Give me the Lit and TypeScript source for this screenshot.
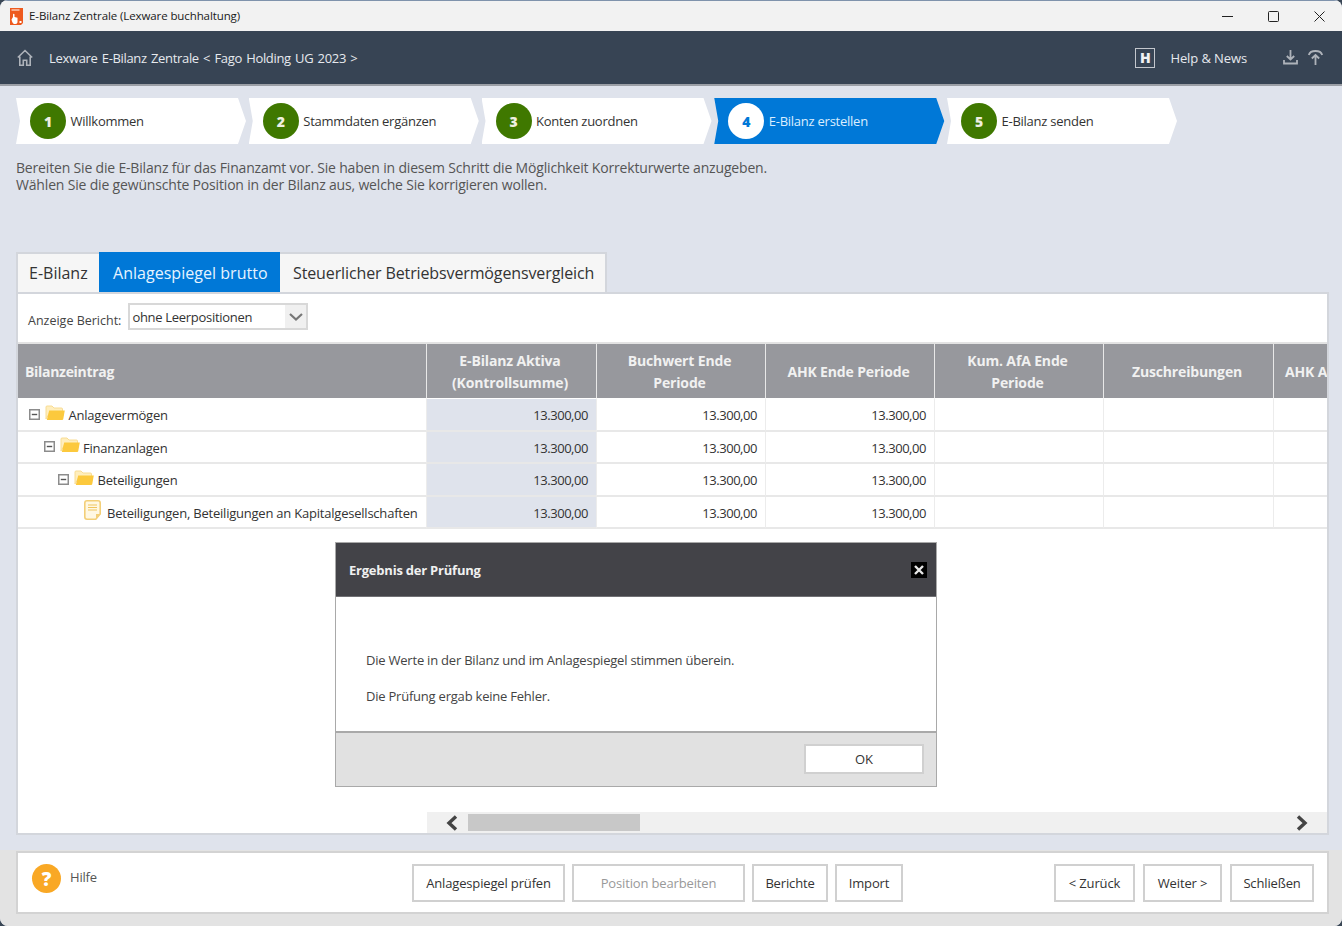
import { LitElement, html, css, svg } from "lit";
import { customElement } from "lit/decorators.js";

const folder = svg`<svg class="folder" viewBox="0 0 20 16" width="20" height="16"><path d="M1 14V2c0-.6.4-1 1-1h5l2 2h7.500c.6 0 1 .4 1 1v3H5z" fill="#ffeebd" stroke="#f8dc94" stroke-width="1"/><path d="M4.200 5.500H19.800l-1.600 8.700c-.1.5-.5.8-1 .8H1.800z" fill="#fcc93d"/></svg>`;
const minus = svg`<svg class="toggle" viewBox="0 0 11 11" width="11" height="11"><rect x=".75" y=".75" width="9.5" height="9.5" fill="#fff" stroke="#8c8c8c" stroke-width="1.5"/><path d="M2.8 5.5h5.4" stroke="#555" stroke-width="1.4"/></svg>`;
const leaf = svg`<svg viewBox="0 0 17 20" width="17" height="20"><path d="M3 .8h11c1.2 0 2.2 1 2.2 2.2v11l-4.400 5.200H3C1.800 19.200.8 18.200.8 17V3C.8 1.800 1.800.8 3 .8z" fill="#fff8e3" stroke="#f3cf78" stroke-width="1.6"/><path d="M4 5h9M4 7.500h9M4 10h9" stroke="#f0c560" stroke-width="1.200"/><path d="M12 18.500v-4.500h4.200z" fill="#f3cf78"/></svg>`;

const STEPS = ["Willkommen", "Stammdaten ergänzen", "Konten zuordnen", "E-Bilanz erstellen", "E-Bilanz senden"];
const COLS = [["E-Bilanz Aktiva", "(Kontrollsumme)"], ["Buchwert Ende", "Periode"], ["AHK Ende Periode"], ["Kum. AfA Ende", "Periode"], ["Zuschreibungen"], ["AHK Anfang"]];
const ROWS = [
  { name: "Anlagevermögen", depth: 0, cls: "r0" },
  { name: "Finanzanlagen", depth: 1, cls: "r1" },
  { name: "Beteiligungen", depth: 2, cls: "r2" },
  { name: "Beteiligungen, Beteiligungen an Kapitalgesellschaften", depth: 3, cls: "r3" },
];

@customElement("app-root")
export class AppRoot extends LitElement {
  static styles = css`
    :host { display: block; width: 1342px; height: 926px; overflow: hidden; background: #3a4756; font-family: "Open Sans", "Noto Sans", sans-serif; color: #333; }
    * { box-sizing: border-box; }
    .win { width: 1342px; height: 926px; display: flex; flex-direction: column; border-radius: 8px; overflow: hidden; background: #dfe3ec; }
    .title { height: 31px; flex: none; background: #f2f2f2; border-top: 1px solid #7f93ac; display: flex; align-items: center; padding-left: 10px; }
    .appicon { width: 13px; height: 17px; flex: none; margin-right: 6px; }
    .title-text { font-size: 11.5px; letter-spacing: -.1px; color: #1a1a1a; flex: 1; padding-bottom: 1px; }
    .winbtns { display: flex; width: 138px; height: 30px; align-items: center; }
    .winbtns svg { display: block; margin: 0 auto; }
    .winbtns div { flex: 1; }
    .head { height: 55px; flex: none; background: #374454; border-bottom: 2px solid #9b9fa6; display: flex; align-items: center; padding: 0 19px 0 17px; color: #e6e9ee; font-size: 13px; letter-spacing: -.13px; }
    .crumb { margin-left: 16px; flex: 1; letter-spacing: -.33px; word-spacing: 1.2px; }
    .hbox { width: 20px; height: 20px; border: 1.5px solid #c3c7cd; display: flex; align-items: center; justify-content: center; margin-right: 15px; font-size: 14px; font-weight: 800; color: #f0f2f5; letter-spacing: 0; }
    .news { margin-right: 36px; letter-spacing: -.1px; }
    .dl { margin-right: 10px; }
    .steps { display: flex; gap: 1.75px; padding: 12px 0 0 16px; height: 58px; flex: none; }
    .step { width: 231px; height: 46px; background: #fff; display: flex; align-items: center; padding-left: 14px; clip-path: polygon(0 0, 222px 0, 230px 23px, 222px 46px, 0 46px, 4px 23px); font-size: 13px; letter-spacing: -.25px; color: #333; }
    .num { width: 36px; height: 36px; border-radius: 50%; background: #3f7800; color: #f0f0e0; display: flex; align-items: center; justify-content: center; font-weight: 800; font-size: 14px; margin-right: 4.5px; letter-spacing: 0; padding-top: 1px; flex: none; }
    .lab { padding-bottom: 1px; }
    .step.on { background: #0078d7; color: #dbeeff; }
    .step.on .num { background: #fff; color: #0078d7; }
    .intro { height: 108px; flex: none; padding: 16px 0 0 16px; font-size: 14px; letter-spacing: -.175px; line-height: 16.5px; color: #555; }
    .tabs { display: flex; height: 40px; flex: none; margin-left: 16px; font-size: 16px; color: #333; white-space: nowrap; }
    .tab { display: flex; align-items: center; background: #f6f6f6; border: 2px solid #d3d6dc; border-bottom: 0; padding: 0 11px; flex: none; }
    .tab.a { width: 83px; border-right: 0; }
    .tab.b { width: 181px; background: #0078d7; color: #e6f3ff; border-color: #0078d7; padding-left: 12px; letter-spacing: .03px; }
    .tab.c { width: 327px; border-left: 0; padding-left: 13px; letter-spacing: -.12px; }
    .panel { margin: 0 13px 0 16px; height: 543px; flex: none; background: #fff; border: 2px solid #d3d6dc; display: flex; flex-direction: column; position: relative; overflow: hidden; }
    .filter { height: 50px; flex: none; display: flex; align-items: center; padding: 0 0 2px 10px; border-bottom: 2px solid #e3e3e3; font-size: 12.5px; letter-spacing: 0; color: #444; }
    .filter .l { margin-top: 6px; margin-right: 7px; }
    .sel { width: 180px; height: 27px; margin-top: -1px; border: 2px solid #d8d8d8; display: flex; align-items: center; justify-content: space-between; font-size: 13px; letter-spacing: -.3px; color: #333; padding-left: 2px; }
    .arrow { width: 21px; height: 100%; background: #f0f0f0; display: flex; align-items: center; justify-content: center; }
    .grid { display: grid; grid-template-columns: 409px 170px 169px 169px 169px 170px 60px; grid-auto-rows: auto; flex: 1; align-content: start; width: 1316px; }
    .th { height: 55px; background: #97989d; color: #f1f1f1; font-weight: 700; font-size: 14px; letter-spacing: -.15px; line-height: 21.5px; display: flex; align-items: center; justify-content: center; text-align: center; border-right: 1px solid #e8e8e8; border-bottom: 1px solid #fff; padding: 1px 3px 0 0; }
    .th.first { justify-content: flex-start; padding-left: 7px; letter-spacing: -.3px; }
    .th.cut { justify-content: flex-start; padding-left: 11px; white-space: nowrap; overflow: hidden; }
    .td { height: 32.5px; border-right: 1px solid #ececec; border-bottom: 2px solid #e8e8e8; font-size: 13px; letter-spacing: -.45px; text-align: right; padding: 7px 8px 0 0; color: #333; line-height: 18px; }
    .td.grey { background: #dfe3ec; }
    .tree { display: flex; align-items: center; text-align: left; padding: 0; font-size: 13px; letter-spacing: -.22px; }
    .tree svg { flex: none; }
    .tree .toggle { margin-right: 5px; }
    .tree .folder { margin-right: 3.5px; margin-top: -3px; }
    .r0 { padding-left: 11px; }
    .r1 { padding-left: 25.5px; }
    .r2 { padding-left: 40px; }
    .r3 { padding-left: 66px; }
    .r3 svg { margin-right: 6px; margin-top: -3px; }
    .tree span { padding-top: 2px; }
    .scroll { height: 21px; flex: none; margin-left: 409px; background: #f0f0f0; display: flex; align-items: center; padding-left: 18px; padding-right: 18px; }
    .scroll svg { margin-top: 1px; }
    .thumb { width: 172px; height: 17px; background: #c8c8c8; margin-left: 9px; }
    .sp { flex: 1; }
    .dialog { position: absolute; left: 317px; top: 248px; width: 602px; height: 245px; border: 1px solid #a9a9a9; background: #fff; display: flex; flex-direction: column; }
    .dh { height: 54px; flex: none; background: #434348; border-bottom: 1px solid #707074; color: #f0f0f0; font-weight: 700; font-size: 13px; letter-spacing: -.22px; display: flex; align-items: center; justify-content: space-between; padding: 0 9px 0 13px; }
    .x { width: 16px; height: 16px; background: #000; display: flex; align-items: center; justify-content: center; }
    .db { flex: 1; padding: 54px 0 0 30px; font-size: 13px; letter-spacing: -.22px; color: #444; line-height: 18px; }
    .db p { margin: 0 0 17.5px; }
    .df { height: 55px; flex: none; background: #e1e1e1; border-top: 2px solid #a9a9a9; display: flex; align-items: center; justify-content: flex-end; padding: 0 12px 2px 0; }
    .df button { width: 120px; height: 30px; }
    button { font: inherit; background: #fff; border: 2px solid #d0d0d0; color: #333; font-size: 13px; letter-spacing: -.15px; height: 38px; padding: 0; display: block; flex: none; }
    .foot { flex: 1; background: #e3e3e3; padding: 1px 13px 0 16px; margin-top: 15px; }
    .fbar { height: 63px; background: #fff; border: 2px solid #d3d3d3; display: flex; padding: 11px 13px 0 14px; }
    .help { display: flex; width: 380px; height: 30px; font-size: 13px; letter-spacing: -.2px; color: #555; }
    .q { width: 29px; height: 29px; border-radius: 50%; background: #f9a825; color: #fff; font-weight: 800; font-size: 19px; display: flex; align-items: center; justify-content: center; margin-right: 9px; letter-spacing: 0; }
    .help .ht { padding-top: 4px; }
    .left { display: flex; gap: 7px; }
    .right { display: flex; gap: 8px; }
    .dis { color: #999; }
  `;

  render() {
    return html`<div class="win">
      <div class="title">
        <svg class="appicon" viewBox="0 0 13 17"><path d="M0 0h13v15l-2 2H0z" fill="#ee5a1e"/><path d="M1.500 2h8" stroke="#fff" stroke-width="1.200"/><path d="M3 9V6.500c0-1 1.500-1 1.500 0V9l3 .8V14c0 1-.8 2-2 2H4.500C3 16 2 14 1.500 11.500z" fill="#fff"/><path d="M9.500 13h2v2h-2z" fill="#fff"/></svg>
        <div class="title-text">E-Bilanz Zentrale (Lexware buchhaltung)</div>
        <div class="winbtns">
          <div><svg width="11" height="3" viewBox="0 0 11 3"><path d="M0 1.500h11" stroke="#222" stroke-width="1"/></svg></div>
          <div><svg width="11" height="11" viewBox="0 0 11 11"><rect x=".5" y=".5" width="10" height="10" rx="1" fill="none" stroke="#222"/></svg></div>
          <div><svg width="11" height="11" viewBox="0 0 11 11"><path d="M.5.500l10 10M10.500.500l-10 10" stroke="#222" fill="none"/></svg></div>
        </div>
      </div>
      <div class="head">
        <svg width="16" height="17" viewBox="0 0 16 17" fill="none" stroke="#aeb3ba" stroke-width="1.600"><path d="M.8 8.500L8 1.500l7.200 7M2.800 7.500v8.700h3.500v-5h3.400v5h3.500V7.500"/></svg>
        <div class="crumb">Lexware E-Bilanz Zentrale &lt; Fago Holding UG 2023 &gt;</div>
        <div class="hbox">H</div>
        <div class="news">Help &amp; News</div>
        <svg class="dl" width="15" height="15" viewBox="0 0 15 15" fill="none" stroke="#aeb3ba" stroke-width="1.800"><path d="M7.500 0v9M3.800 6l3.700 3.500L11.200 6M1 10v3.500h13V10"/></svg>
        <svg width="15" height="15" viewBox="0 0 15 15" fill="none" stroke="#aeb3ba" stroke-width="1.800"><path d="M7.500 15V5M3.800 8.500l3.700-3.500 3.700 3.500M.8 5C1.500 2.500 4 1 7.500 1s6 1.500 6.700 4"/></svg>
      </div>
      <div class="steps">
        ${STEPS.map((s, i) => html`<div class="step ${i === 3 ? "on" : ""}"><div class="num">${i + 1}</div><div class="lab">${s}</div></div>`)}
      </div>
      <div class="intro">Bereiten Sie die E-Bilanz für das Finanzamt vor. Sie haben in diesem Schritt die Möglichkeit Korrekturwerte anzugeben.<br>Wählen Sie die gewünschte Position in der Bilanz aus, welche Sie korrigieren wollen.</div>
      <div class="tabs">
        <div class="tab a">E-Bilanz</div>
        <div class="tab b">Anlagespiegel brutto</div>
        <div class="tab c">Steuerlicher Betriebsvermögensvergleich</div>
      </div>
      <div class="panel">
        <div class="filter">
          <span class="l">Anzeige Bericht:</span>
          <div class="sel"><span>ohne Leerpositionen</span><div class="arrow"><svg width="14" height="8" viewBox="0 0 14 8" fill="none" stroke="#777" stroke-width="2.200"><path d="M1 1l6 5.500L13 1"/></svg></div></div>
        </div>
        <div class="grid">
          <div class="th first">Bilanzeintrag</div>
          ${COLS.map((c, i) => html`<div class="th ${i === 5 ? "cut" : ""}"><div>${c[0]}${c[1] ? html`<br>${c[1]}` : ""}</div></div>`)}
          ${ROWS.map((r) => html`
            <div class="td tree ${r.cls}">${r.depth < 3 ? html`${minus}${folder}` : leaf}<span>${r.name}</span></div>
            <div class="td grey">13.300,00</div>
            <div class="td">13.300,00</div>
            <div class="td">13.300,00</div>
            <div class="td"></div><div class="td"></div><div class="td"></div>
          `)}
        </div>
        <div class="scroll">
          <svg width="14" height="16" viewBox="0 0 14 16" fill="none" stroke="#444" stroke-width="3.4"><path d="M11 1.500L4 8l7 6.500"/></svg>
          <div class="thumb"></div>
          <div class="sp"></div>
          <svg width="14" height="16" viewBox="0 0 14 16" fill="none" stroke="#444" stroke-width="3.4"><path d="M3 1.500L10 8l-7 6.500"/></svg>
        </div>
        <div class="dialog">
          <div class="dh"><span>Ergebnis der Prüfung</span><div class="x"><svg width="10" height="10" viewBox="0 0 10 10" stroke="#e8e8e8" stroke-width="2.400"><path d="M1 1l8 8M9 1l-8 8"/></svg></div></div>
          <div class="db"><p>Die Werte in der Bilanz und im Anlagespiegel stimmen überein.</p><p>Die Prüfung ergab keine Fehler.</p></div>
          <div class="df"><button>OK</button></div>
        </div>
      </div>
      <div class="foot">
        <div class="fbar">
          <div class="help"><div class="q">?</div><div class="ht">Hilfe</div></div>
          <div class="left">
            <button style="width:153px">Anlagespiegel prüfen</button>
            <button class="dis" style="width:173px">Position bearbeiten</button>
            <button style="width:76px">Berichte</button>
            <button style="width:68px">Import</button>
          </div>
          <div class="sp"></div>
          <div class="right">
            <button style="width:81px">&lt; Zurück</button>
            <button style="width:79px">Weiter &gt;</button>
            <button style="width:84px">Schließen</button>
          </div>
        </div>
      </div>
    </div>`;
  }
}
